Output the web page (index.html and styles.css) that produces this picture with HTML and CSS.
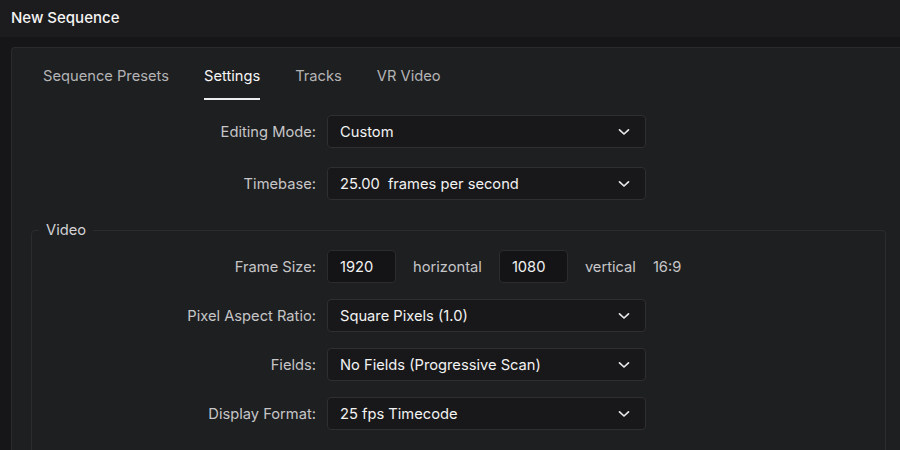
FILE: index.html
```html
<!DOCTYPE html>
<html>
<head>
<meta charset="utf-8">
<link rel="stylesheet" href="styles.css">
</head>
<body>
<div class="titlebar">New Sequence</div>
<div class="panel">
  <div class="tabs">
    <div class="tab">Sequence Presets</div>
    <div class="tab active">Settings</div>
    <div class="tab">Tracks</div>
    <div class="tab">VR Video</div>
  </div>
  <div class="form top">
    <div class="row">
      <div class="label">Editing Mode:</div>
      <div class="select"><span class="value">Custom</span><svg class="chev" width="12" height="8" viewBox="0 0 12 8"><path d="M1.5 1.8 L6 6 L10.5 1.8" fill="none" stroke="#e8e8e8" stroke-width="1.7" stroke-linecap="round" stroke-linejoin="round"/></svg></div>
    </div>
    <div class="row">
      <div class="label">Timebase:</div>
      <div class="select"><span class="value"><span class="num">25.00</span>frames per second</span><svg class="chev" width="12" height="8" viewBox="0 0 12 8"><path d="M1.5 1.8 L6 6 L10.5 1.8" fill="none" stroke="#e8e8e8" stroke-width="1.7" stroke-linecap="round" stroke-linejoin="round"/></svg></div>
    </div>
  </div>
  <fieldset class="group">
    <legend>Video</legend>
    <div class="row">
      <div class="label">Frame Size:</div>
      <div class="input">1920</div>
      <span class="unit">horizontal</span>
      <div class="input">1080</div>
      <span class="unit">vertical</span>
      <span class="unit">16:9</span>
    </div>
    <div class="row">
      <div class="label">Pixel Aspect Ratio:</div>
      <div class="select"><span class="value">Square Pixels (1.0)</span><svg class="chev" width="12" height="8" viewBox="0 0 12 8"><path d="M1.5 1.8 L6 6 L10.5 1.8" fill="none" stroke="#e8e8e8" stroke-width="1.7" stroke-linecap="round" stroke-linejoin="round"/></svg></div>
    </div>
    <div class="row">
      <div class="label">Fields:</div>
      <div class="select"><span class="value">No Fields (Progressive Scan)</span><svg class="chev" width="12" height="8" viewBox="0 0 12 8"><path d="M1.5 1.8 L6 6 L10.5 1.8" fill="none" stroke="#e8e8e8" stroke-width="1.7" stroke-linecap="round" stroke-linejoin="round"/></svg></div>
    </div>
    <div class="row">
      <div class="label">Display Format:</div>
      <div class="select"><span class="value">25 fps Timecode</span><svg class="chev" width="12" height="8" viewBox="0 0 12 8"><path d="M1.5 1.8 L6 6 L10.5 1.8" fill="none" stroke="#e8e8e8" stroke-width="1.7" stroke-linecap="round" stroke-linejoin="round"/></svg></div>
    </div>
  </fieldset>
</div>
</body>
</html>
```

FILE: styles.css
```css
html, body {
  margin: 0;
  padding: 0;
  background: #161618;
  overflow: hidden;
  width: 900px;
  height: 450px;
  font-family: Inter, "Noto Sans", "Liberation Sans", sans-serif;
  font-size: 14.7px;
  color: #ececec;
}

.titlebar {
  height: 37px;
  line-height: 36px;
  padding-left: 11px;
  background: #1c1c1e;
  color: #f4f4f4;
  font-size: 15px;
  font-weight: 500;
  box-sizing: border-box;
}

.panel {
  margin-top: 10px;
  margin-left: 11px;
  width: 900px;
  height: 403px;
  box-sizing: border-box;
  overflow: hidden;
  background: #1e1f21;
  border-top: 1px solid #2a2b2d;
  border-left: 1px solid #2a2b2d;
  border-top-left-radius: 4px;
}

.tabs {
  display: flex;
  gap: 35px;
  padding-left: 31px;
  padding-top: 18px;
}

.tab {
  color: #b4b4b6;
  line-height: 20px;
  padding-bottom: 12px;
  border-bottom: 2px solid transparent;
}

.tab.active {
  color: #f6f6f6;
  border-bottom-color: #ededed;
}

.form.top {
  padding-top: 15px;
  display: flex;
  flex-direction: column;
  gap: 19px;
}

.row {
  display: flex;
  align-items: center;
  height: 33px;
}

.label {
  flex: none;
  width: 304px;
  text-align: right;
  color: #c6c6c8;
  margin-right: 11px;
}

.select {
  flex: none;
  width: 319px;
  height: 33px;
  box-sizing: border-box;
  background: #18181a;
  border: 1px solid #2f2f32;
  border-radius: 4px;
  display: flex;
  align-items: center;
  justify-content: space-between;
  padding-left: 12px;
  padding-right: 15px;
  color: #f2f2f2;
}

.num {
  margin-right: 8px;
}

.chev {
  display: block;
}

.group {
  margin: 21px 0 0 19px;
  width: 855px;
  box-sizing: border-box;
  border: 1px solid #2c2c2f;
  border-radius: 4px;
  padding: 11px 0 40px 0;
  display: flex;
  flex-direction: column;
  gap: 16px;
}

.group legend {
  margin-left: 7px;
  padding: 0 7px;
  line-height: 18px;
  color: #d2d2d4;
}

.group .label {
  width: 284px;
}

.input {
  flex: none;
  width: 69px;
  height: 33px;
  box-sizing: border-box;
  background: #141416;
  border: 1px solid #2c2c2f;
  border-radius: 4px;
  padding-left: 12px;
  display: flex;
  align-items: center;
  color: #f2f2f2;
}

.unit {
  color: #c6c6c8;
  margin: 0 17px 0 17px;
}

.unit + .unit {
  margin-left: 0;
}
```
